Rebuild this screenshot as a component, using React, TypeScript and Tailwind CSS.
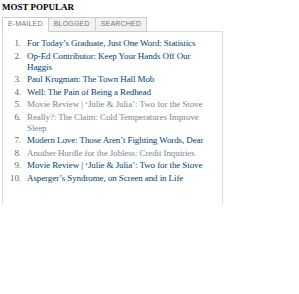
const items = [
  { title: "For Today’s Graduate, Just One Word: Statistics", visited: false },
  { title: "Op-Ed Contributor: Keep Your Hands Off Our Haggis", visited: false },
  { title: "Paul Krugman: The Town Hall Mob", visited: false },
  { title: "Well: The Pain of Being a Redhead", visited: false },
  { title: "Movie Review | ‘Julie & Julia’: Two for the Stove", visited: true },
  { title: "Really?: The Claim: Cold Temperatures Improve Sleep", visited: true },
  { title: "Modern Love: Those Aren’t Fighting Words, Dear", visited: false },
  { title: "Another Hurdle for the Jobless: Credit Inquiries", visited: true },
  { title: "Movie Review | ‘Julie & Julia’: Two for the Stove", visited: false },
  { title: "Asperger’s Syndrome, on Screen and in Life", visited: false },
];

const tabs = ["E-MAILED", "BLOGGED", "SEARCHED"];

export default function App() {
  return (
    <div className="w-[299px] h-[294px] bg-white px-[2px] pt-[2px]">
      <h3 className="font-['Liberation_Serif',serif] font-bold text-[9px] leading-[10px] text-black">
        MOST POPULAR
      </h3>
      <div className="mt-[5px] flex">
        {tabs.map((t, i) => (
          <div
            key={t}
            className={`h-[15px] px-[5px] flex items-center font-['Liberation_Sans',sans-serif] text-[7px] tracking-[0.2px] text-[#777] border border-[#ccc] ${
              i === 0 ? "bg-white border-b-white" : "bg-[#f2f2f2] border-l-0"
            } relative z-10 -mb-px`}
          >
            {t}
          </div>
        ))}
      </div>
      <div className="w-[221px] h-[174px] border border-[#ddd] border-b-0 pt-[6px]">
        <ol className="font-['Liberation_Serif',serif] text-[9px] leading-[11px] tracking-[-0.1px]">
          {items.map((it, i) => (
            <li key={i} className="flex mb-[1.5px]">
              <span className="w-[18px] shrink-0 text-right text-[#666]">{i + 1}.</span>
              <span className={`pl-[6px] pr-[10px] ${it.visited ? "text-[#7a8794]" : "text-[#004276]"}`}>
                {it.title}
              </span>
            </li>
          ))}
        </ol>
      </div>
    </div>
  );
}
